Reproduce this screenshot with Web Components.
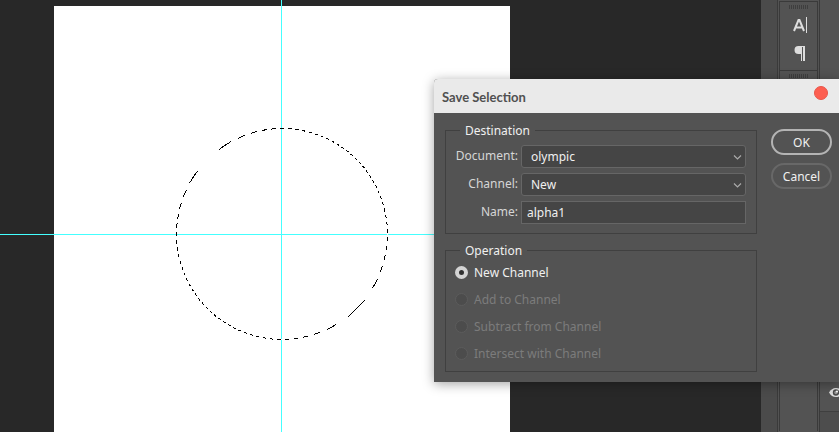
<!DOCTYPE html>
<html lang="en">
<head>
<meta charset="utf-8">
<title>Save Selection</title>
<style>
html, body { margin: 0; height: 100%; overflow: hidden; background: #282828; }
body { font: 12px/16px "Noto Sans", "Open Sans", sans-serif; color: #f0f0f0; }
</style>
</head>
<body>
<ps-workspace>
  <ps-artboard slot="canvas"></ps-artboard>
  <ps-toolstrip slot="tools"></ps-toolstrip>
  <ps-layers slot="layers"></ps-layers>
  <ps-dialog slot="window" heading="Save Selection">
    <ps-group heading="Destination">
      <ps-fields></ps-fields>
    </ps-group>
    <ps-group heading="Operation">
      <ps-operations></ps-operations>
    </ps-group>
    <ps-button slot="actions" primary>OK</ps-button>
    <ps-button slot="actions">Cancel</ps-button>
  </ps-dialog>
</ps-workspace>
<script>
function define(name, render) {
  customElements.define(name, class extends HTMLElement {
    constructor() {
      super();
      this.attachShadow({ mode: "open" });
    }
    connectedCallback() {
      const t = document.createElement("template");
      t.innerHTML = "<style>*{box-sizing:border-box}</style>" + render(this);
      this.shadowRoot.replaceChildren(t.content.cloneNode(true));
    }
  });
}

define("ps-workspace", () => `
<style>
:host { display: grid; grid-template-columns: 1fr 16px 43px 19px; height: 100vh; position: relative; overflow: hidden; }
.canvas { background: #282828; overflow: hidden; min-width: 0; }
.gutter { background: #4b4b4b; }
::slotted([slot=window]) { position: absolute; left: 434px; right: 0; top: 79px; }
</style>
<div class="canvas"><slot name="canvas"></slot></div>
<div class="gutter"></div>
<slot name="tools"></slot>
<slot name="layers"></slot>
<slot name="window"></slot>`);

/* Document page with two guides and a dashed selection outline. */
define("ps-artboard", () => `
<style>
:host { display: block; height: 100%; }
svg { display: block; width: 100%; height: 100%; }
</style>
<svg shape-rendering="crispEdges" role="img" aria-label="Canvas with circular selection">
  <defs>
    <linearGradient id="ants" gradientUnits="userSpaceOnUse" spreadMethod="repeat" x1="0.25" y1="0.25" x2="4.25" y2="4.25">
      <stop offset="0" stop-color="#000"/><stop offset="0.5" stop-color="#000"/>
      <stop offset="0.5" stop-color="#fff"/><stop offset="1" stop-color="#fff"/>
    </linearGradient>
  </defs>
  <rect x="54" y="6" width="456" height="100%" fill="#fff"/>
  <rect x="281" y="0" width="1" height="100%" fill="#4ff"/>
  <rect x="0" y="234" width="100%" height="1" fill="#4ff"/>
  <circle cx="282" cy="234" r="105.5" fill="none" stroke="url(#ants)"/>
</svg>`);

define("ps-toolstrip", () => `
<style>
:host { display: flex; flex-direction: column; background: #535353; border: solid #3a3a3a; border-width: 0 1px; padding: 1px 0; }
.set { flex: none; border: 1px solid #3a3a3a; border-bottom: 0; margin: 0 1px; height: 69px; display: flex; flex-direction: column; align-items: center; }
.set.last { flex: 1; }
.grip { flex: none; width: 19px; height: 4px; margin-top: 3px; background: repeating-linear-gradient(90deg, #3e3e3e 0 1px, #535353 1px 2px); }
button { all: unset; box-sizing: border-box; width: 29px; height: 28px; display: block; }
svg { display: block; width: 29px; height: 28px; }
.icons { margin-top: 3px; }
</style>
<div class="set"><div class="grip"></div>
  <div class="icons">
  <button aria-label="Character"><svg viewBox="0 0 29 28"><path d="M10 19 14.500 8h1L20 19M11.500 15.500h7" fill="none" stroke="#ddd" stroke-width="2"/><path d="M22.500 5v16" stroke="#ddd"/></svg></button>
  <button aria-label="Paragraph"><svg viewBox="0 0 29 28"><path d="M21 6h-6.500a4 4 0 0 0 0 8H17v7h1V7h1v14h2z" fill="#ddd"/></svg></button>
  </div>
</div>
<div class="set last"><div class="grip"></div></div>`);

define("ps-layers", () => `
<style>
:host { display: flex; flex-direction: column; background: #4d4d4d; overflow: hidden; }
.row { height: 412px; flex: none; background: #535353; border-bottom: 1px solid #3f3f3f; display: flex; align-items: flex-end; padding: 0 0 12px 9px; }
button { all: unset; display: block; }
svg { display: block; width: 14px; height: 12px; }
</style>
<div class="row"><button aria-label="Layer visibility"><svg viewBox="0 0 14 12"><path d="M0 5.500Q2.500 1 7 1t7 4.500Q11.500 10 7 10T0 5.500z" fill="#ddd"/><circle cx="7" cy="5.500" r="3.200" fill="#4a4a4a"/><circle cx="7" cy="5.500" r="1.700" fill="#999"/><circle cx="8" cy="4.500" r="1" fill="#fff"/></svg></button></div>`);

define("ps-dialog", el => `
<style>
:host { display: block; background: #535353; border-top-left-radius: 4px; box-shadow: 0 2px 12px rgba(0,0,0,.36); }
header { display: flex; justify-content: space-between; height: 34px; padding: 0 11px 0 8px; background: #eaeaea; border-top-left-radius: 4px; }
h1 { margin: 0; font: 700 13px/37px Lato, sans-serif; color: #505050; }
.close { all: unset; width: 14px; height: 14px; margin-top: 7px; border-radius: 50%; background: #fd5e50; border: 1px solid #e8564a; box-sizing: border-box; }
.body { display: grid; grid-template-columns: 1fr 61px; gap: 14px; padding: 9px 7px 10px 11px; }
.main { display: flex; flex-direction: column; gap: 8px; }
.actions { display: flex; flex-direction: column; gap: 8px; padding-top: 7px; }
</style>
<header><h1>${el.getAttribute("heading")}</h1><button class="close" aria-label="Close"></button></header>
<div class="body">
  <div class="main"><slot></slot></div>
  <div class="actions"><slot name="actions"></slot></div>
</div>`);

define("ps-group", el => `
<style>
:host { display: block; }
fieldset { margin: 0; min-width: 0; border: 1px solid #404040; padding: 0 10px 0 8px; }
legend { height: 16px; margin-left: 6px; padding: 0 5px; line-height: 18px; color: #f0f0f0; }
</style>
<fieldset><legend>${el.getAttribute("heading")}</legend><slot></slot></fieldset>`);

define("ps-fields", () => `
<style>
:host { display: grid; grid-template-columns: 64px 1fr; column-gap: 3px; row-gap: 5px; padding: 7px 0 9px; }
label { text-align: right; line-height: 22px; color: #d6d6d6; }
.select { display: grid; grid-template-columns: 1fr 14px; align-items: center; }
select, input { width: 100%; height: 23px; margin: 0; background: #454545; border: 1px solid #666; color: #f0f0f0; font: inherit; outline: 0; }
select { appearance: none; grid-area: 1 / 1 / 2 / 3; border-radius: 3px; padding: 1px 20px 0 9px; }
input { padding: 0 5px; }
svg { grid-area: 1 / 2; width: 9px; height: 7px; margin: 2px 0 0 1px; pointer-events: none; }
</style>
<label for="doc">Document:</label>
<div class="select"><select id="doc"><option>olympic</option></select><svg viewBox="0 0 9 7"><path d="M1 1.500 4.500 5 8 1.500" fill="none" stroke="#aaa" stroke-width="1.200"/></svg></div>
<label for="chan">Channel:</label>
<div class="select"><select id="chan"><option>New</option></select><svg viewBox="0 0 9 7"><path d="M1 1.500 4.500 5 8 1.500" fill="none" stroke="#aaa" stroke-width="1.200"/></svg></div>
<label for="name">Name:</label>
<input id="name" type="text" value="alpha1">`);

define("ps-operations", () => `
<style>
:host { display: block; padding: 1px 0 4px 1px; }
label { display: flex; align-items: center; gap: 6px; height: 27px; color: #f0f0f0; }
label.off { color: #7c7c7c; }
input { appearance: none; flex: none; width: 13px; height: 13px; margin: 0; border-radius: 50%; background: #4c4c4c; border: 1px solid #5c5c5c; }
input:checked { border: 4px solid #d4d4d4; background: #303030; }
</style>
<label><input type="radio" name="op" checked>New Channel</label>
<label class="off"><input type="radio" name="op" disabled>Add to Channel</label>
<label class="off"><input type="radio" name="op" disabled>Subtract from Channel</label>
<label class="off"><input type="radio" name="op" disabled>Intersect with Channel</label>`);

define("ps-button", el => `
<style>
:host { display: block; }
button { width: 100%; height: 26px; padding: 1px 0 0; border-radius: 13px; background: transparent; color: #f0f0f0; font: inherit; border: ${el.hasAttribute("primary") ? "2px solid #b4b4b4" : "2px solid #686868"}; }
</style>
<button type="button"><slot></slot></button>`);
</script>
</body>
</html>
